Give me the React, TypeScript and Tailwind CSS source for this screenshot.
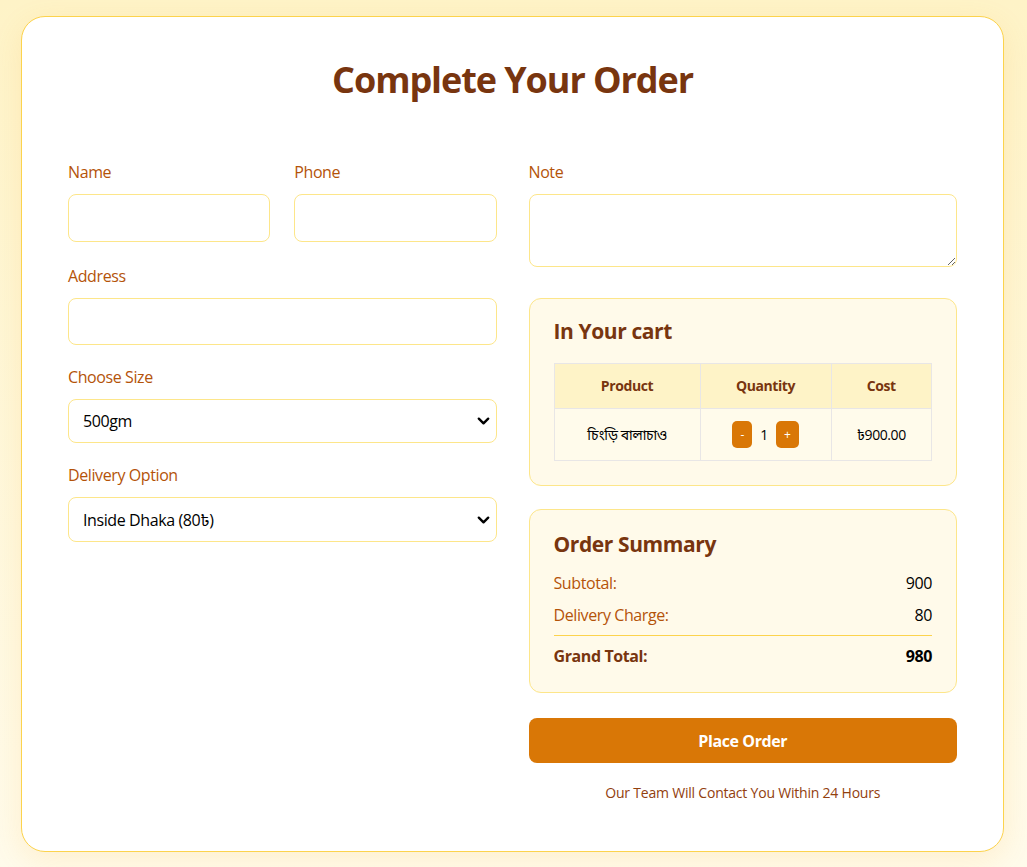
import { useState } from 'react';

function Chevron() {
    return (
        <svg
            className="pointer-events-none absolute right-[7px] top-1/2 h-[9px] w-[13px] -translate-y-1/2"
            viewBox="0 0 13 9"
            fill="none"
            stroke="black"
            strokeWidth={2.4}
            strokeLinecap="round"
            strokeLinejoin="round"
        >
            <path d="M1.8 2.2 L6.5 6.8 L11.2 2.2" />
        </svg>
    );
}

export default function App() {
    const [qty, setQty] = useState(1);
    const price = 900;
    const delivery = 80;
    const subtotal = price * qty;

    const labelCls = 'block text-base leading-6 text-[#b45309] mb-2.5';
    const inputCls =
        'block w-full rounded-lg border border-[#fde68a] bg-white px-[14px] text-base text-black outline-none focus:border-[#f59e0b]';

    return (
        <div
            className="min-h-screen bg-gradient-to-b from-[#fef3c7] to-[#fffbeb] pt-4 pb-4 tracking-[-0.025em]"
            style={{ fontFamily: '"Open Sans", "Noto Sans", "Noto Sans Bengali", sans-serif' }}
        >
            <div className="ml-[21px] w-[983px] rounded-[24px] border border-[#fcd34d] bg-white px-[46px] pt-[43px] pb-12 shadow-[0_8px_30px_rgba(245,158,11,0.12)]">
                {/* Title */}
                <h1 className="mb-[60px] text-center text-4xl leading-10 font-bold tracking-[-0.03em] text-[#78350f]">
                    Complete Your Order
                </h1>

                <div className="grid grid-cols-2 gap-8">
                    {/* Left column */}
                    <div>
                        <div className="mb-[22px] grid grid-cols-2 gap-6">
                            <div>
                                <label className={labelCls}>Name</label>
                                <input className={`${inputCls} h-12`} />
                            </div>
                            <div>
                                <label className={labelCls}>Phone</label>
                                <input className={`${inputCls} h-12`} />
                            </div>
                        </div>

                        <div className="mb-5">
                            <label className={labelCls}>Address</label>
                            <input className={`${inputCls} h-[47px]`} />
                        </div>

                        <div className="mb-5">
                            <label className={labelCls}>Choose Size</label>
                            <div className="relative">
                                <select className={`${inputCls} h-11 appearance-none`} defaultValue="500gm">
                                    <option>500gm</option>
                                    <option>1kg</option>
                                </select>
                                <Chevron />
                            </div>
                        </div>

                        <div>
                            <label className={labelCls}>Delivery Option</label>
                            <div className="relative">
                                <select className={`${inputCls} h-[45px] appearance-none`} defaultValue="inside">
                                    <option value="inside">Inside Dhaka (80৳)</option>
                                    <option value="outside">Outside Dhaka (150৳)</option>
                                </select>
                                <Chevron />
                            </div>
                        </div>
                    </div>

                    {/* Right column */}
                    <div>
                        <div className="mb-[31px]">
                            <label className={labelCls}>Note</label>
                            <textarea className={`${inputCls} h-[73px] py-2`} />
                        </div>

                        {/* Cart */}
                        <div className="mb-[23px] rounded-xl border border-[#fde68a] bg-[#fffaea] px-6 pt-[22px] pb-6">
                            <h3 className="mb-[21px] text-[21px] leading-none font-bold text-[#78350f]">In Your cart</h3>
                            <table className="w-full border-collapse text-sm">
                                <thead>
                                    <tr className="bg-[#fef3c7]">
                                        <th className="w-[146px] border border-[#e8e6e6] py-3 font-bold text-[#78350f]">Product</th>
                                        <th className="w-[131px] border border-[#e8e6e6] py-3 font-bold text-[#78350f]">Quantity</th>
                                        <th className="border border-[#e8e6e6] py-3 font-bold text-[#78350f]">Cost</th>
                                    </tr>
                                </thead>
                                <tbody>
                                    <tr className="bg-[#fffbeb]">
                                        <td className="border border-[#e8e6e6] py-3 text-center text-black">চিংড়ি বালাচাও</td>
                                        <td className="border border-[#e8e6e6] py-3">
                                            <div className="flex items-center justify-center">
                                                <button
                                                    onClick={() => setQty(Math.max(1, qty - 1))}
                                                    className="flex h-[27px] w-5 items-center justify-center rounded-[5px] bg-[#d97706] text-xs text-white"
                                                >
                                                    -
                                                </button>
                                                <span className="mx-2 text-black">{qty}</span>
                                                <button
                                                    onClick={() => setQty(qty + 1)}
                                                    className="flex h-[27px] w-[23px] items-center justify-center rounded-[5px] bg-[#d97706] text-xs text-white"
                                                >
                                                    +
                                                </button>
                                            </div>
                                        </td>
                                        <td className="border border-[#e8e6e6] py-3 text-center text-black">৳{subtotal.toFixed(2)}</td>
                                    </tr>
                                </tbody>
                            </table>
                        </div>

                        {/* Order Summary */}
                        <div className="rounded-xl border border-[#fde68a] bg-[#fffaea] px-6 pt-6 pb-6">
                            <h3 className="mb-4 text-[21px] leading-none font-bold text-[#78350f]">Order Summary</h3>
                            <div className="flex justify-between text-base leading-6">
                                <span className="text-[#b45309]">Subtotal:</span>
                                <span className="text-black">{subtotal}</span>
                            </div>
                            <div className="mt-2 flex justify-between text-base leading-6">
                                <span className="text-[#b45309]">Delivery Charge:</span>
                                <span className="text-black">{delivery}</span>
                            </div>
                            <div className="mt-2 flex justify-between border-t border-[#fcd34d] pt-2 text-base leading-6 font-bold">
                                <span className="text-[#78350f]">Grand Total:</span>
                                <span className="text-black">{subtotal + delivery}</span>
                            </div>
                        </div>

                        <button className="mt-[25px] h-[45px] w-full rounded-lg bg-[#d97706] text-base font-bold text-white hover:bg-[#b45309]">
                            Place Order
                        </button>

                        <p className="mt-5 text-center text-sm leading-5 tracking-[-0.015em] text-[#92400e]">
                            Our Team Will Contact You Within 24 Hours
                        </p>
                    </div>
                </div>
            </div>
        </div>
    );
}
